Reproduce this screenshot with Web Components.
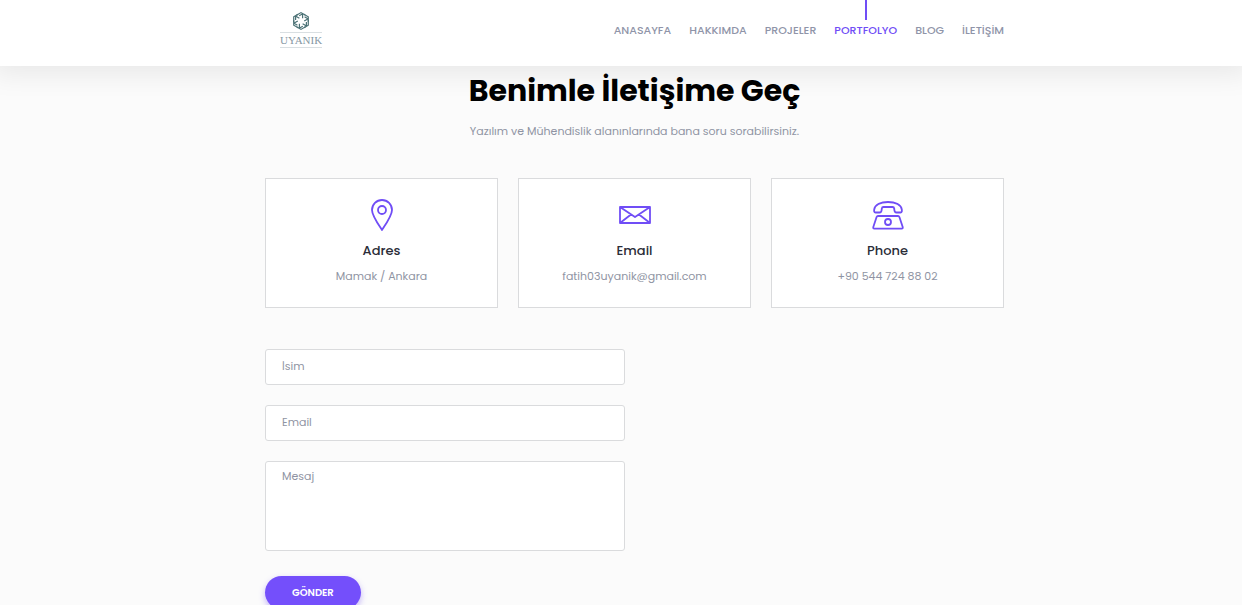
<!DOCTYPE html>
<html lang="tr">
<head>
<meta charset="utf-8">
<meta name="viewport" content="width=device-width, initial-scale=1">
<title>Benimle İletişime Geç</title>
<style>
  :root {
    --accent: #704df6;
    --muted: #8f94a3;
    --line: #dadbdd;
    --page: 739px;
    --shift: 27px;
  }
  body {
    margin: 0;
    background: #fbfbfb;
    color: var(--muted);
    font: 11px/20px Poppins, Inter, sans-serif;
  }
</style>
</head>
<body>
<site-header>
  <nav-link href="#anasayfa">ANASAYFA</nav-link>
  <nav-link href="#hakkimda">HAKKIMDA</nav-link>
  <nav-link href="#projeler">PROJELER</nav-link>
  <nav-link href="#portfolyo" active>PORTFOLYO</nav-link>
  <nav-link href="#blog">BLOG</nav-link>
  <nav-link href="#iletisim">İLETİŞİM</nav-link>
</site-header>
<contact-section>
  <span slot="title">Benimle İletişime Geç</span>
  <span slot="lead">Yazılım ve Mühendislik alanınlarında bana soru sorabilirsiniz.</span>
  <info-card icon="pin"><span slot="name">Adres</span>Mamak / Ankara</info-card>
  <info-card icon="mail"><span slot="name">Email</span>fatih03uyanik@gmail.com</info-card>
  <info-card icon="phone"><span slot="name">Phone</span>+90 544 724 88 02</info-card>
  <contact-form slot="form"></contact-form>
</contact-section>

<script>
const define = (name, html, setup) => {
  const template = document.createElement('template');
  template.innerHTML = html;
  customElements.define(name, class extends HTMLElement {
    constructor() {
      super();
      this.attachShadow({ mode: 'open' }).append(template.content.cloneNode(true));
    }
    connectedCallback() { if (setup) setup(this, this.shadowRoot); }
  });
};

define('brand-logo', `
  <style>
    :host { display: block; }
    a { display: flex; flex-direction: column; align-items: center; width: 42px; text-decoration: none; color: #8697a3; }
    svg { display: block; width: 18px; height: 20px; }
    span { box-sizing: border-box; width: 100%; margin-top: 1px; border: solid #d9dfe2; border-width: 1px 0; text-align: center; font: 11px/14px "Liberation Serif", serif; }
  </style>
  <a href="#anasayfa" aria-label="Uyanık">
    <svg viewBox="-9 -10 18 20" fill="none" stroke="#4a7074" stroke-width="1.2" aria-hidden="true">
      <defs><path id="arm" d="M-4.500-5.800 0-8.400 4.200-6M-1.800-5.200 1.400-7M1.600-6.800V-2.800"/></defs>
      <use href="#arm"/><use href="#arm" transform="rotate(60)"/><use href="#arm" transform="rotate(120)"/>
      <use href="#arm" transform="rotate(180)"/><use href="#arm" transform="rotate(240)"/><use href="#arm" transform="rotate(300)"/>
    </svg>
    <span>UYANIK</span>
  </a>`);

define('nav-link', `
  <style>
    :host { display: block; position: relative; }
    a { display: block; padding: 20px 0; color: #8f94a8; font-weight: 500; text-decoration: none; }
    :host([active]) a { color: var(--accent); }
    :host([active])::before { content: ""; position: absolute; top: 0; left: 50%; width: 2px; height: 20px; margin-left: -1px; background: var(--accent); }
  </style>
  <a><slot></slot></a>`,
  (host, root) => { root.querySelector('a').href = host.getAttribute('href'); });

define('site-header', `
  <style>
    :host { display: block; position: sticky; top: 0; z-index: 1; padding-left: var(--shift); background: #fff; box-shadow: 0 0 28px 8px rgba(0, 0, 0, .08); }
    .bar { box-sizing: border-box; display: flex; justify-content: space-between; align-items: flex-start; max-width: var(--page); min-height: 66px; margin: auto; }
    brand-logo { padding: 11px 0 0 15px; }
    nav { display: flex; gap: 18px; }
  </style>
  <header class="bar"><brand-logo></brand-logo><nav><slot></slot></nav></header>`);

const icons = {
  pin: '<path d="M16 31C12 25 6 16.500 6 11a10 10 0 0 1 20 0c0 5.500-6 14-10 20Z"/><circle cx="16" cy="11" r="4"/>',
  mail: '<path d="M1 8h30v16H1ZM1 8l15 10L31 8M1 24l11-8.500M31 24l-11-8.500"/>',
  phone: '<path d="M6 17h20q1 0 1.400 1l3.300 10q.4 1.600-1 1.600H2.300q-1.400 0-1-1.600l3.300-10q.4-1 1.400-1Z"/><circle cx="16" cy="23" r="3"/><path d="M3.500 13.500C2 13.500 2 12 2.200 10.500 3 5.500 9 3 16 3s13 2.500 13.800 7.500c.2 1.500.2 3-1.300 3h-4c-2.500 0-2-2-2.300-4Q22 8 20.500 8h-9Q10 8 9.800 9.500c-.3 2 .2 4-2.300 4Z"/>'
};

define('info-card', `
  <style>
    :host { display: block; box-sizing: border-box; padding: 20px 10px 21px; background: #fff; border: 1px solid var(--line); text-align: center; }
    svg { display: block; width: 32px; height: 32px; margin: 0 auto 10px; }
    h3 { margin: 0; color: #2b2d38; font-size: 13px; line-height: 20px; font-weight: 500; }
    p { margin: 5px 0 0; }
  </style>
  <svg viewBox="0 0 32 32" fill="none" stroke="#704df6" stroke-width="1.800" stroke-linejoin="round" aria-hidden="true"></svg>
  <h3><slot name="name"></slot></h3>
  <p><slot></slot></p>`,
  (host, root) => { root.querySelector('svg').innerHTML = icons[host.getAttribute('icon')]; });

define('contact-form', `
  <style>
    :host { display: block; }
    form { display: grid; gap: 20px; justify-items: start; }
    input, textarea { box-sizing: border-box; display: block; width: 100%; margin: 0; padding: 0 16px; border: 1px solid var(--line); border-radius: 3px; background: #fff; color: #2b2d38; font: inherit; resize: none; }
    input { height: 36px; padding-bottom: 2px; }
    textarea { height: 90px; padding-top: 4px; }
    ::placeholder { color: var(--muted); opacity: 1; }
    button { height: 33px; margin-top: 5px; padding: 0 27px; border: 0; border-radius: 17px; background: #744ffb; color: #fff; font: 600 10px/20px Poppins, Inter, sans-serif; box-shadow: 0 3px 6px rgba(112, 77, 246, .4); }
  </style>
  <form>
    <input type="text" name="isim" placeholder="İsim" aria-label="İsim">
    <input type="email" name="email" placeholder="Email" aria-label="Email">
    <textarea name="mesaj" placeholder="Mesaj" aria-label="Mesaj"></textarea>
    <button type="submit">GÖNDER</button>
  </form>`);

define('contact-section', `
  <style>
    :host { display: block; padding-left: var(--shift); }
    main { max-width: var(--page); margin: auto; }
    h1 { margin: 0; padding-top: 5px; color: #000; font-size: 30px; line-height: 40px; font-weight: 700; text-align: center; }
    .lead { margin: 10px 0 37px; text-align: center; }
    .cards { display: grid; grid-template-columns: repeat(3, 1fr); gap: 20px; }
    .form { max-width: 360px; margin-top: 41px; }
  </style>
  <main>
    <h1><slot name="title"></slot></h1>
    <p class="lead"><slot name="lead"></slot></p>
    <div class="cards"><slot></slot></div>
    <div class="form"><slot name="form"></slot></div>
  </main>`);
</script>
</body>
</html>
